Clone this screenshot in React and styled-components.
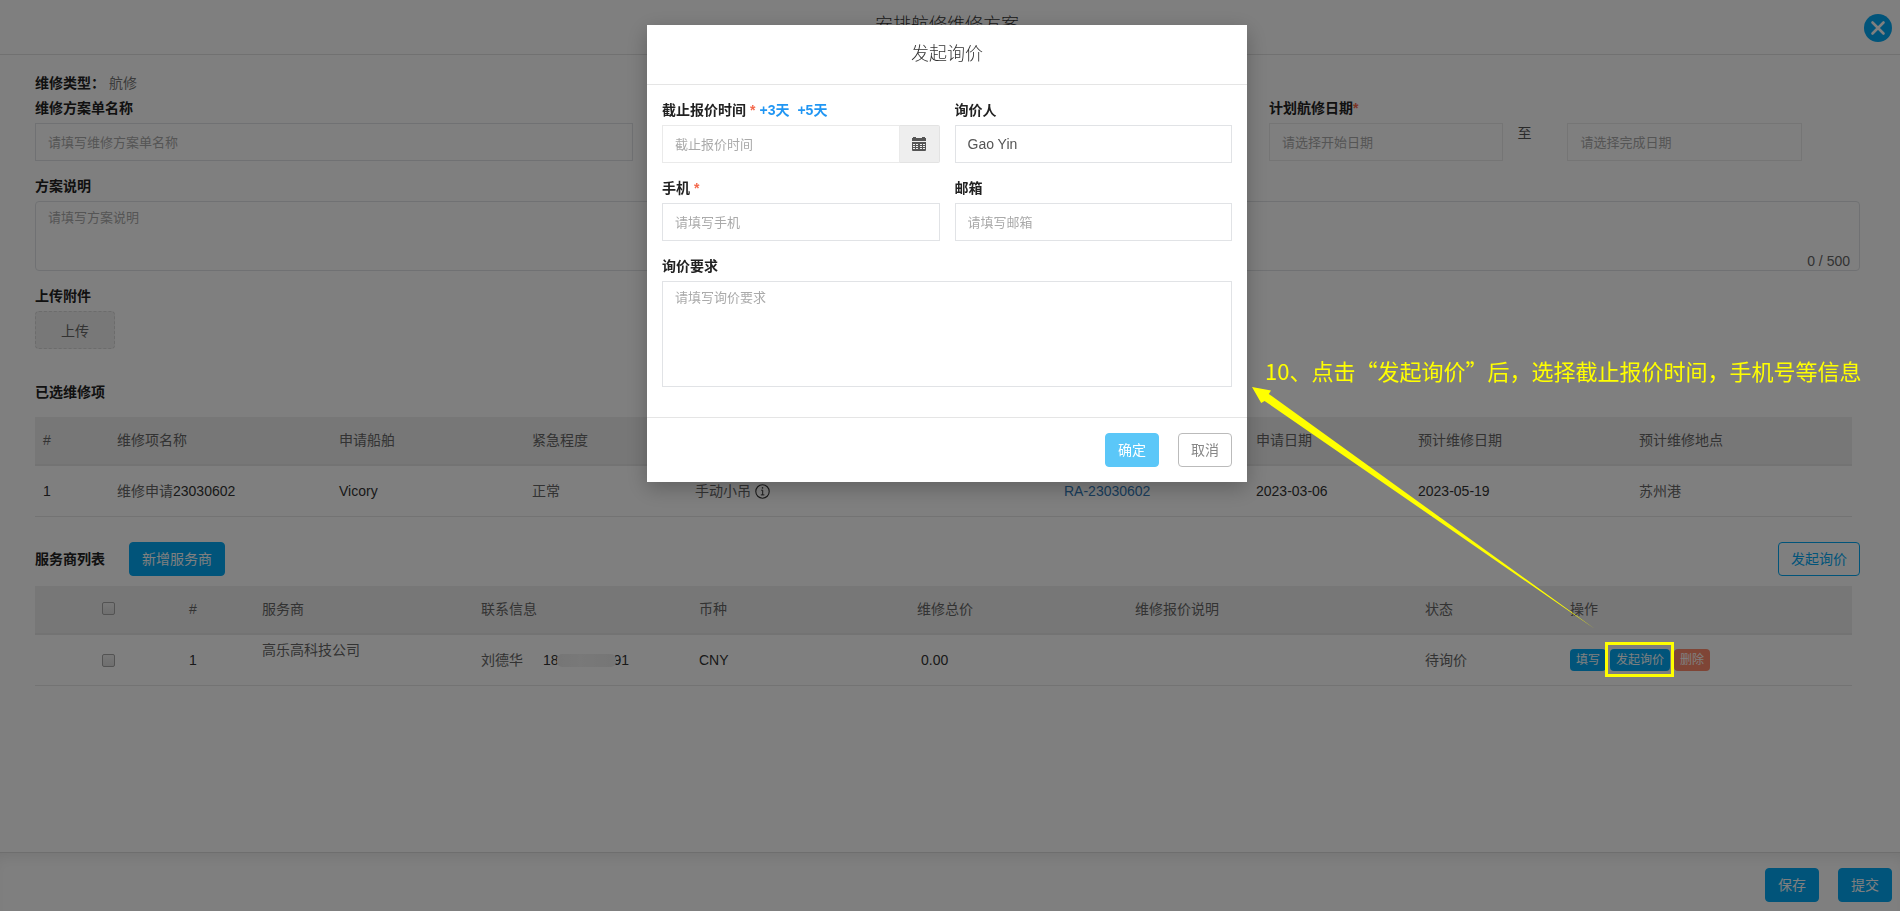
import React from "react";
import styled, { createGlobalStyle } from "styled-components";

const GlobalStyle = createGlobalStyle`
  *, *::before, *::after { box-sizing: border-box; }
  body {
    margin: 0;
    background: #fff;
    color: #333;
    font: 14px/20px "Liberation Sans", "Noto Sans CJK SC", sans-serif;
  }
  button, input, textarea { font-family: inherit; }
`;

const Page = styled.div`
  min-height: 100vh;
  display: flex;
  flex-direction: column;
`;

const Header = styled.header`
  height: 55px;
  padding: 8px 8px 6px 2px;
  border-bottom: 1px solid #e3e3e3;
  display: grid;
  grid-template-columns: 28px 1fr 28px;
  align-items: center;
`;

const PageTitle = styled.h1`
  grid-column: 2;
  margin: 0 0 6px;
  font-size: 18px;
  line-height: 28px;
  font-weight: 300;
  text-align: center;
`;

const CloseButton = styled.button`
  width: 28px;
  height: 28px;
  padding: 0;
  border: 0;
  border-radius: 50%;
  background: #03a9f4;
  display: grid;
  place-items: center;
`;

const Main = styled.main`
  flex: 1;
  padding: 18px 40px 0 35px;
`;

const TypeLine = styled.p`
  margin: 0 0 5px;
  display: flex;
  gap: 4px;
  color: #777;
`;

const FormRow = styled.div`
  display: grid;
  grid-template-columns: repeat(3, 1fr);
  margin-right: -26px;
`;

const Field = styled.div`
  display: flex;
  flex-direction: column;
  gap: 5px;
  margin-bottom: 15px;
  padding-right: ${(p) => p.$inset || 0}px;
  grid-column: ${(p) => p.$column || "auto"};
  min-width: 0;
`;

const Label = styled.label`
  color: #222;
  font-weight: 700;
`;

const LabelText = styled.span`
  color: #222;
  font-weight: 700;
`;

const LabelRow = styled.div`
  display: flex;
  gap: 4px;
`;

const Required = styled.span`
  color: #f4694c;
  font-weight: 700;
`;

const QuickLink = styled.a`
  color: #2196f3;
  font-weight: 700;
  text-decoration: none;
  & + & { margin-left: 4px; }
`;

const TextInput = styled.input`
  width: ${(p) => p.$width || "100%"};
  min-width: 0;
  height: 38px;
  padding: 0 12px;
  border: 1px solid ${(p) => (p.$light ? "#eaeaea" : "#e1e3e6")};
  border-radius: 0;
  background: transparent;
  color: #555;
  font-size: ${(p) => (p.$large ? 14 : 13)}px;
  outline: 0;
  &::placeholder { color: #aaa; opacity: 1; }
`;

const TextArea = styled.textarea`
  display: block;
  width: 100%;
  height: ${(p) => p.$height}px;
  padding: 6px 12px;
  border: 1px solid #e1e3e6;
  border-radius: ${(p) => p.$radius || 0}px;
  background: transparent;
  font-size: 13px;
  line-height: 20px;
  resize: none;
  outline: 0;
  &::placeholder { color: #aaa; opacity: 1; }
`;

const CountedArea = styled.div`
  position: relative;
`;

const Counter = styled.span`
  position: absolute;
  right: 10px;
  bottom: 0;
  color: #666;
`;

const DateRange = styled.div`
  display: flex;
  align-items: flex-start;
`;

const RangeWord = styled.span`
  margin: 0 36px 0 14px;
  color: #555;
`;

const UploadButton = styled.button`
  width: 80px;
  height: 38px;
  border: 1px dashed #d9d9d9;
  border-radius: 4px;
  background: #f0f0f0;
  color: #666;
  font-size: 14px;
`;

const SectionHead = styled.div`
  display: flex;
  align-items: center;
  gap: 24px;
  margin: ${(p) => p.$margin};
`;

const SectionTitle = styled.h2`
  margin: 0;
  color: #222;
  font-size: 14px;
  line-height: 20px;
  font-weight: 700;
`;

const Button = styled.button`
  height: 34px;
  padding: 0 12px;
  border: 1px solid ${(p) => p.$line || "#03a9f4"};
  border-radius: 4px;
  background: ${(p) => p.$fill || "#03a9f4"};
  color: ${(p) => p.$ink || "#fff"};
  font-size: 14px;
  line-height: 20px;
  margin-left: ${(p) => (p.$end ? "auto" : 0)};
  &:disabled { border-color: #5bc7f8; background: #5bc7f8; }
`;

const SmallButton = styled.button`
  height: 22px;
  padding: 0 6px;
  border: 0;
  border-radius: 4px;
  background: ${(p) => p.$fill || "#03a9f4"};
  color: #fff;
  font-size: 12px;
  line-height: 20px;
`;

const Actions = styled.div`
  display: flex;
  gap: 4px;
`;

const DataTable = styled.table`
  width: calc(100% - 8px);
  table-layout: fixed;
  border-collapse: separate;
  border-spacing: 0;
`;

const Th = styled.th`
  height: 49px;
  padding: 0 8px 2px;
  background: #efefef;
  border-bottom: 2px solid #e7e7e7;
  color: #666;
  font-weight: 400;
  text-align: ${(p) => (p.$center ? "center" : "left")};
`;

const Td = styled.td`
  height: 51px;
  padding: ${(p) => (p.$top ? "5px 8px" : "0 8px")};
  padding-left: ${(p) => (p.$indent ? 12 : 8)}px;
  border-bottom: 1px solid #e7e7e7;
  color: ${(p) => (p.$soft ? "#666" : "#333")};
  vertical-align: ${(p) => (p.$top ? "top" : "middle")};
  text-align: ${(p) => (p.$center ? "center" : "left")};
`;

const Strong = styled.span`
  color: #333;
`;

const Check = styled.input`
  appearance: none;
  display: block;
  width: 13px;
  height: 13px;
  margin: 0 auto;
  border: 1px solid #a6a6a6;
  border-radius: 2px;
  background: linear-gradient(#f0f0f0, #dedede);
  &:checked { background: #03a9f4; }
`;

const RecordLink = styled.a`
  color: #337ab7;
  text-decoration: none;
`;

const WithIcon = styled.span`
  display: flex;
  align-items: center;
  gap: 4px;
`;

const Contact = styled.span`
  display: flex;
  align-items: center;
  gap: 20px;
`;

const Phone = styled.span`
  display: flex;
  align-items: center;
  color: #333;
`;

const Mask = styled.span`
  width: 59px;
  height: 13px;
  margin: 0 -2px;
  border-radius: 5px;
  background: linear-gradient(90deg, #ececec, #f2f2f2 40%, #ececec);
  position: relative;
`;

const Footer = styled.footer`
  display: flex;
  justify-content: flex-end;
  gap: 19px;
  padding: 15px 8px 9px;
  border-top: 1px solid #dcdcdc;
  box-shadow: inset 0 10px 16px -8px rgba(0, 0, 0, 0.1);
`;

const Backdrop = styled.div`
  position: fixed;
  inset: 0;
  z-index: 10;
  padding: 25px 6px 0 0;
  background: rgba(0, 0, 0, 0.5);
`;

const Dialog = styled.section`
  width: 600px;
  max-width: 100%;
  margin: 0 auto;
  background: #fff;
  box-shadow: 0 6px 20px rgba(0, 0, 0, 0.25);
`;

const DialogHeader = styled.header`
  height: 60px;
  padding: 15px;
  border-bottom: 1px solid #e5e5e5;
`;

const DialogTitle = styled.h2`
  margin: 0;
  font-size: 18px;
  line-height: 28px;
  font-weight: 300;
  text-align: center;
`;

const DialogBody = styled.div`
  display: grid;
  grid-template-columns: 1fr 1fr;
  column-gap: 15px;
  padding: 15px;
`;

const DialogFooter = styled.footer`
  display: flex;
  justify-content: flex-end;
  gap: 19px;
  padding: 15px;
  border-top: 1px solid #e5e5e5;
`;

const InputGroup = styled.div`
  display: flex;
`;

const CalendarButton = styled.button`
  flex: 0 0 40px;
  height: 38px;
  padding: 0;
  border: 1px solid #e3e3e3;
  border-left: 0;
  border-radius: 0 2px 2px 0;
  background: #eee;
  display: grid;
  place-items: center;
`;

const Annotations = styled.div`
  position: absolute;
  inset: 0;
  z-index: 20;
  overflow: hidden;
  pointer-events: none;
`;

const Note = styled.p`
  position: absolute;
  left: 1265px;
  top: 354px;
  margin: 0;
  color: #ff0;
  font: 22px/32px "Noto Sans CJK SC", sans-serif;
  white-space: nowrap;
`;

const Arrow = styled.svg`
  position: absolute;
  left: 1252px;
  top: 387px;
`;

const Highlight = styled.div`
  position: absolute;
  left: 1605px;
  top: 642px;
  width: 69px;
  height: 35px;
  border: 3px solid #ff0;
`;

const Columns = ({ weights }) => {
  const total = weights.reduce((a, b) => a + b, 0);
  return (
    <colgroup>
      {weights.map((w, i) => (
        <col key={i} style={{ width: `${(w / total) * 100}%` }} />
      ))}
    </colgroup>
  );
};

const CloseIcon = () => (
  <svg width="16" height="16" viewBox="0 0 16 16" aria-hidden="true">
    <path d="M2.5 2.5 13.5 13.5M13.5 2.5 2.5 13.5" stroke="#fff" strokeWidth="2.6" strokeLinecap="round" />
  </svg>
);

const InfoIcon = () => (
  <svg width="15" height="15" viewBox="0 0 15 15" fill="none" stroke="#333" aria-hidden="true">
    <circle cx="7.5" cy="7.5" r="6.7" strokeWidth="1.1" />
    <path d="M6.2 6.2h1.5v4.7M5.8 10.9h3.6" strokeWidth="1" />
    <circle cx="7.5" cy="3.9" r=".8" fill="#333" stroke="none" />
  </svg>
);

const CalendarIcon = () => (
  <svg width="14" height="14" viewBox="0 0 14 14" aria-hidden="true">
    <path
      fill="#555"
      fillRule="evenodd"
      d="M0 1h1V0h3v1h6V0h3v1h1v3H0ZM0 5h14v8a1 1 0 0 1-1 1H1a1 1 0 0 1-1-1ZM1 7v1h2V7ZM4 7v1h2V7ZM8 7v1h2V7ZM11 7v1h2V7ZM1 9v1h2V9ZM4 9v1h2V9ZM8 9v1h2V9ZM11 9v1h2V9ZM1 11v1h2v-1ZM4 11v1h2v-1ZM8 11v1h2v-1ZM11 11v1h2v-1Z"
    />
  </svg>
);

const InquiryDialog = () => (
  <Backdrop>
    <Dialog role="dialog" aria-modal="true" aria-labelledby="inquiry-title">
      <DialogHeader>
        <DialogTitle id="inquiry-title">发起询价</DialogTitle>
      </DialogHeader>
      <DialogBody>
        <Field>
          <LabelRow>
            <Label htmlFor="deadline">截止报价时间</Label>
            <Required>*</Required>
            <QuickLink href="#plus3">+3天</QuickLink>
            <QuickLink href="#plus5">+5天</QuickLink>
          </LabelRow>
          <InputGroup>
            <TextInput id="deadline" $light placeholder="截止报价时间" />
            <CalendarButton type="button">
              <CalendarIcon />
            </CalendarButton>
          </InputGroup>
        </Field>
        <Field>
          <Label htmlFor="inquirer">询价人</Label>
          <TextInput id="inquirer" $large defaultValue="Gao Yin" />
        </Field>
        <Field>
          <LabelRow>
            <Label htmlFor="mobile">手机</Label>
            <Required>*</Required>
          </LabelRow>
          <TextInput id="mobile" placeholder="请填写手机" />
        </Field>
        <Field>
          <Label htmlFor="email">邮箱</Label>
          <TextInput id="email" placeholder="请填写邮箱" />
        </Field>
        <Field $column="1 / -1">
          <Label htmlFor="demand">询价要求</Label>
          <TextArea id="demand" $height={106} placeholder="请填写询价要求" />
        </Field>
      </DialogBody>
      <DialogFooter>
        <Button type="button" disabled>确定</Button>
        <Button type="button" $fill="#fff" $line="#bbb" $ink="#888">取消</Button>
      </DialogFooter>
    </Dialog>
  </Backdrop>
);

export default function App() {
  return (
    <>
      <GlobalStyle />
      <Page>
        <Header>
          <PageTitle>安排航修维修方案</PageTitle>
          <CloseButton type="button">
            <CloseIcon />
          </CloseButton>
        </Header>

        <Main>
          <TypeLine>
            <LabelText>维修类型：</LabelText>
            <span>航修</span>
          </TypeLine>
          <FormRow>
            <Field $inset={19}>
              <Label htmlFor="plan-name">维修方案单名称</Label>
              <TextInput id="plan-name" placeholder="请填写维修方案单名称" />
            </Field>
            <Field $column="3">
              <Label htmlFor="start-date">
                计划航修日期<Required>*</Required>
              </Label>
              <DateRange>
                <TextInput id="start-date" $light $width="38%" placeholder="请选择开始日期" />
                <RangeWord>至</RangeWord>
                <TextInput id="end-date" $light $width="38%" placeholder="请选择完成日期" />
              </DateRange>
            </Field>
          </FormRow>
          <Field>
            <Label htmlFor="plan-note">方案说明</Label>
            <CountedArea>
              <TextArea id="plan-note" $height={70} $radius={4} placeholder="请填写方案说明" />
              <Counter>0 / 500</Counter>
            </CountedArea>
          </Field>
          <Field>
            <LabelText>上传附件</LabelText>
            <UploadButton type="button">上传</UploadButton>
          </Field>

          <SectionHead $margin="33px 0 15px">
            <SectionTitle>已选维修项</SectionTitle>
          </SectionHead>
          <DataTable>
            <Columns weights={[74, 222, 193, 163, 369, 192, 162, 221, 221]} />
            <thead>
              <tr>
                <Th>#</Th>
                <Th>维修项名称</Th>
                <Th>申请船舶</Th>
                <Th>紧急程度</Th>
                <Th />
                <Th />
                <Th>申请日期</Th>
                <Th>预计维修日期</Th>
                <Th>预计维修地点</Th>
              </tr>
            </thead>
            <tbody>
              <tr>
                <Td>1</Td>
                <Td $soft>
                  维修申请<Strong>23030602</Strong>
                </Td>
                <Td>Vicory</Td>
                <Td $soft>正常</Td>
                <Td $soft>
                  <WithIcon>
                    手动小吊
                    <InfoIcon />
                  </WithIcon>
                </Td>
                <Td>
                  <RecordLink href="#record">RA-23030602</RecordLink>
                </Td>
                <Td>2023-03-06</Td>
                <Td>2023-05-19</Td>
                <Td $soft>苏州港</Td>
              </tr>
            </tbody>
          </DataTable>

          <SectionHead $margin="25px 0 10px">
            <SectionTitle>服务商列表</SectionTitle>
            <Button type="button">新增服务商</Button>
            <Button type="button" $end $fill="transparent" $ink="#03a9f4">发起询价</Button>
          </SectionHead>
          <DataTable>
            <Columns weights={[146, 73, 219, 218, 218, 218, 290, 145, 290]} />
            <thead>
              <tr>
                <Th $center><Check type="checkbox" aria-labelledby="col-vendor" /></Th>
                <Th>#</Th>
                <Th id="col-vendor">服务商</Th>
                <Th>联系信息</Th>
                <Th>币种</Th>
                <Th>维修总价</Th>
                <Th>维修报价说明</Th>
                <Th>状态</Th>
                <Th>操作</Th>
              </tr>
            </thead>
            <tbody>
              <tr>
                <Td $center><Check type="checkbox" aria-labelledby="vendor-1" /></Td>
                <Td>1</Td>
                <Td $top $soft id="vendor-1">高乐高科技公司</Td>
                <Td $soft>
                  <Contact>
                    刘德华
                    <Phone>
                      18
                      <Mask />
                      91
                    </Phone>
                  </Contact>
                </Td>
                <Td>CNY</Td>
                <Td $indent>0.00</Td>
                <Td />
                <Td $soft>待询价</Td>
                <Td>
                  <Actions>
                    <SmallButton type="button">填写</SmallButton>
                    <SmallButton type="button">发起询价</SmallButton>
                    <SmallButton type="button" $fill="#ff8a6c">删除</SmallButton>
                  </Actions>
                </Td>
              </tr>
            </tbody>
          </DataTable>
        </Main>

        <Footer>
          <Button type="button">保存</Button>
          <Button type="button">提交</Button>
        </Footer>
      </Page>

      <InquiryDialog />

      <Annotations>
        <Note>10、点击“发起询价”后，选择截止报价时间，手机号等信息</Note>
        <Arrow width="344" height="243" viewBox="0 0 344 243" aria-hidden="true">
          <path d="M0 0 19 3.5 16.8 7 343 242 12.6 14 9.2 16Z" fill="#ff0" />
        </Arrow>
        <Highlight />
      </Annotations>
    </>
  );
}
